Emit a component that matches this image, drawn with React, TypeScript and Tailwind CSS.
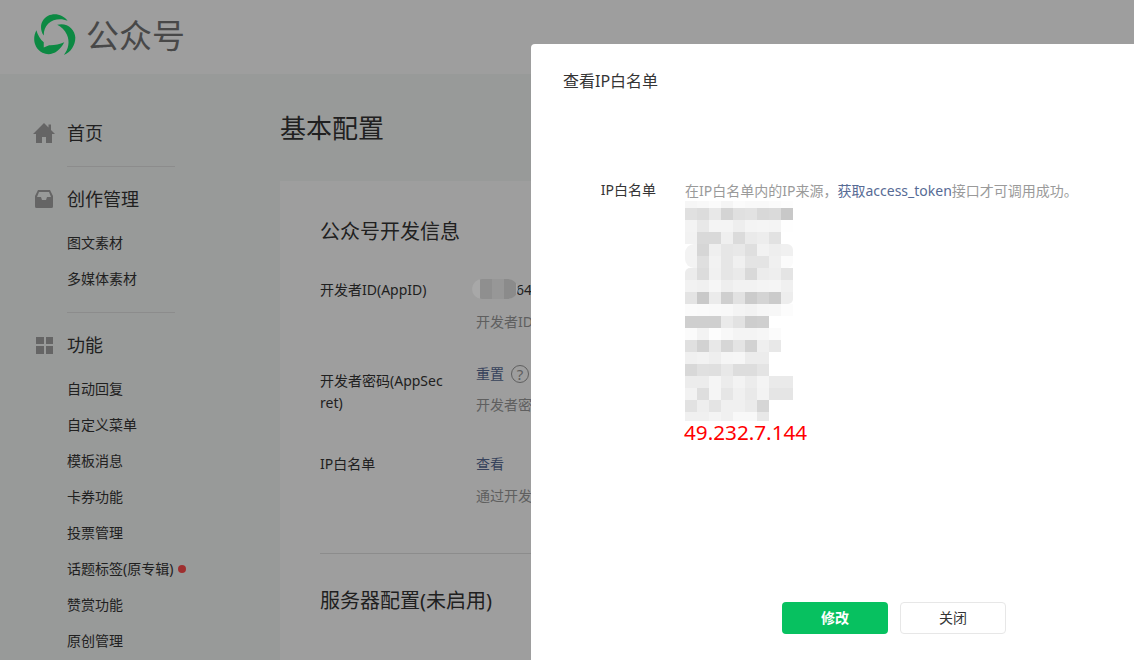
import React from "react";

const font = { fontFamily: '"Noto Sans", "Noto Sans CJK SC", sans-serif' };

const mosaic: { h: number; v: number[]; cls?: string }[] = [
  { h: 7, v: [0xf6, 0xf8, 0xfb, 0xf5, 0xfb, 0xf9, 0xf9, 0xfb, 0xfd] },
  { h: 12, v: [0xe0, 0xdc, 0xe8, 0xd4, 0xe0, 0xe2, 0xd8, 0xda, 0xc8] },
  { h: 12, v: [0xf3, 0xe8, 0xf4, 0xf4, 0xee, 0xf4, 0xf5, 0xf4, 0xfe] },
  { h: 12, v: [0xf2, 0xd9, 0xd9, 0xef, 0xdb, 0xea, 0xed, 0xe2, 0xff] },
  { h: 12, v: [0xf3, 0xd6, 0xef, 0xe6, 0xe8, 0xdf, 0xf2, 0xee, 0xf0], cls: "rounded-tl-[9px] rounded-tr-[6px]" },
  { h: 12, v: [0xf3, 0xdf, 0xf2, 0xe6, 0xf0, 0xe4, 0xe4, 0xf0, 0xfb], cls: "rounded-bl-[9px] rounded-br-[6px]" },
  { h: 12, v: [0xec, 0xdc, 0xf1, 0xe6, 0xea, 0xd9, 0xec, 0xee, 0xe4], cls: "rounded-tl-[5px]" },
  { h: 12, v: [0xf2, 0xf0, 0xf6, 0xee, 0xf2, 0xf2, 0xf4, 0xf5, 0xf0] },
  { h: 12, v: [0xe4, 0xc9, 0xeb, 0xcf, 0xe2, 0xcb, 0xd4, 0xcb, 0xed], cls: "rounded-br-[5px]" },
  { h: 12, v: [0xfb, 0xfa, 0xf9, 0xf8, 0xf4, 0xf2, 0xf6, 0xf7, 0xfc] },
  { h: 12, v: [0xcf, 0xcf, 0xcf, 0xea, 0xe2, 0xcd, 0xcf, 0xff, 0xff] },
  { h: 12, v: [0xfb, 0xf3, 0xfd, 0xf8, 0xf4, 0xf4, 0xf6, 0xfb, 0xff] },
  { h: 12, v: [0xe0, 0xd2, 0xe8, 0xd6, 0xe4, 0xd2, 0xef, 0xe8, 0xff] },
  { h: 12, v: [0xf0, 0xf2, 0xee, 0xf5, 0xf6, 0xec, 0xec, 0xff, 0xff] },
  { h: 12, v: [0xd8, 0xe0, 0xdf, 0xe8, 0xdd, 0xdd, 0xe4, 0xff, 0xff] },
  { h: 12, v: [0xec, 0xec, 0xf5, 0xec, 0xf3, 0xec, 0xf4, 0xea, 0xea] },
  { h: 12, v: [0xf2, 0xde, 0xf5, 0xe6, 0xf0, 0xe9, 0xf3, 0xe5, 0xe5] },
  { h: 12, v: [0xe2, 0xee, 0xe4, 0xf0, 0xf0, 0xeb, 0xd6, 0xff, 0xff] },
  { h: 9, v: [0xf0, 0xf0, 0xf4, 0xf0, 0xf8, 0xf8, 0xe8, 0xff, 0xff] },
];

function Logo() {
  return (
    <svg width="43" height="43" viewBox="40 25 128 128" className="mt-[-5px] shrink-0" fill="#14de6c">
      <path d="M72 92C58 72 62 45 85 33C105 23 130 30 143 48C125 40 100 42 85 57C76 66 72 78 72 92Z" />
      <path d="M112 60C140 52 165 72 166 98C166 122 152 142 132 150C146 132 150 110 141 90C135 76 124 66 112 60Z" />
      <path d="M50 76C38 100 42 128 68 143C92 155 118 142 133 112C120 118 100 122 88 121L72 128L72 112C62 104 54 90 50 76Z" />
    </svg>
  );
}

function HomeIcon() {
  return (
    <svg width="22" height="20" viewBox="0 0 22 20" fill="#a4a4a4">
      <path d="M11 0L15.500 4.500V1.500H18V7L22 11H19V20H13V14H9V20H3V11H0Z" />
    </svg>
  );
}

function TrayIcon() {
  return (
    <svg width="18" height="18" viewBox="0 0 18 18" fill="#a4a4a4">
      <path
        fillRule="evenodd"
        d="M3 0H15L18 6V16.500Q18 18 16.500 18H1.500Q0 18 0 16.500V6ZM4 2L2 7H6L7 10H11L12 7H16L14 2Z"
      />
    </svg>
  );
}

function GridIcon() {
  return (
    <div className="ml-[3px] grid w-[17px] grid-cols-2 gap-[2px]">
      <div className="h-[7.5px] w-[7.5px] bg-[#a4a4a4]" />
      <div className="h-[7.5px] w-[7.5px] bg-[#a4a4a4]" />
      <div className="h-[7.5px] w-[7.5px] bg-[#a4a4a4]" />
      <div className="h-[7.5px] w-[7.5px] bg-[#a4a4a4]" />
    </div>
  );
}

function NavHead({ icon, label, cls }: { icon: React.ReactNode; label: string; cls: string }) {
  return (
    <div className={`flex h-9 items-center ${cls}`}>
      <div className="flex w-[34px] shrink-0 items-center justify-start">{icon}</div>
      <span className="text-[18px] text-[#353535]">{label}</span>
    </div>
  );
}

function SubItem({ label, dot }: { label: string; dot?: boolean }) {
  return (
    <div className="flex h-9 items-center pl-[34px] text-[14px] text-[#353535]">
      <span>{label}</span>
      {dot && <span className="ml-[5px] h-2 w-2 rounded-full bg-[#ff4d4d]" />}
    </div>
  );
}

export default function App() {
  return (
    <div
      className="relative h-[660px] w-[1134px] overflow-hidden bg-[#f6f8f7] text-[14px] leading-[22px]"
      style={font}
    >
      <header className="flex h-[74px] items-center gap-[10px] bg-white pl-[33px]">
        <Logo />
        <span className="mt-[-3px] text-[33px] leading-[40px] text-[#757575]">公众号</span>
      </header>

      <div className="flex">
        <aside className="w-[280px] shrink-0 pl-[33px] pt-[41px]">
          <NavHead icon={<HomeIcon />} label="首页" cls="" />
          <div className="ml-[34px] mt-[15px] h-px w-[108px] bg-[#e2e2e2]" />
          <NavHead icon={<div className="ml-[2px] flex"><TrayIcon /></div>} label="创作管理" cls="mt-[14px]" />
          <div className="mt-2">
            <SubItem label="图文素材" />
            <SubItem label="多媒体素材" />
          </div>
          <div className="ml-[34px] mt-[15px] h-px w-[108px] bg-[#e2e2e2]" />
          <NavHead icon={<GridIcon />} label="功能" cls="mt-[14px]" />
          <div className="mt-2">
            <SubItem label="自动回复" />
            <SubItem label="自定义菜单" />
            <SubItem label="模板消息" />
            <SubItem label="卡券功能" />
            <SubItem label="投票管理" />
            <SubItem label="话题标签(原专辑)" dot />
            <SubItem label="赞赏功能" />
            <SubItem label="原创管理" />
          </div>
        </aside>

        <main className="min-w-0 flex-1 pt-[34px]">
          <h1 className="text-[26px] font-normal leading-[40px] text-[#353535]">基本配置</h1>
          <section className="mt-[33px] h-[600px] bg-white pl-10 pt-[36px]">
            <h2 className="text-[20px] leading-[30px] text-[#353535]">公众号开发信息</h2>

            <div className="mt-[32px] flex">
              <div className="w-[156px] shrink-0 text-[#353535]">开发者ID(AppID)</div>
              <div className="whitespace-nowrap">
                <div className="pl-10 text-[#353535]">64</div>
                <div className="mt-[10px] text-[#9a9a9a]">开发者ID是公众号开发识别码</div>
              </div>
            </div>

            <div className="mt-[30px] flex">
              <div className="mt-[7px] w-[156px] shrink-0 pr-[30px] break-all text-[#353535]">
                开发者密码(AppSecret)
              </div>
              <div className="whitespace-nowrap">
                <div className="flex items-center gap-[7px] text-[#576b95]">
                  重置
                  <span className="flex h-[18px] w-[18px] items-center justify-center rounded-full border border-[#9a9a9a] text-[15px] leading-none text-[#9a9a9a]">
                    ?
                  </span>
                </div>
                <div className="mt-[9px] text-[#9a9a9a]">开发者密码是校验公众号开发者身份的密码</div>
              </div>
            </div>

            <div className="mt-[37px] flex">
              <div className="w-[156px] shrink-0 text-[#353535]">IP白名单</div>
              <div className="whitespace-nowrap">
                <div className="text-[#576b95]">查看</div>
                <div className="mt-[10px] text-[#9a9a9a]">通过开发者ID及密码调用获取access_token接口</div>
              </div>
            </div>

            <div className="mt-[46px] h-px bg-[#e2e2e2]" />
            <h2 className="mt-[32px] text-[20px] leading-[30px] text-[#353535]">服务器配置(未启用)</h2>
          </section>
        </main>
      </div>

      <div className="absolute inset-0 bg-black/[.38]" />

      {/* blurred AppID patch pasted over the dimmed page */}
      <div className="absolute left-[472px] top-[279px] flex h-[20px] w-[46px] items-center overflow-hidden rounded-full bg-[#a8a8a8] pl-[8px]">
        <div className="h-[20px] w-[12px] bg-[#8f8f8f]" />
        <div className="h-[20px] w-[12px] bg-[#979797]" />
        <div className="h-[20px] w-[12px] bg-[#8b8b8b]" />
      </div>

      <div className="absolute left-[531px] top-[44px] h-[700px] w-[726px] rounded-tl-[4px] bg-white pl-8 pt-[26px]">
        <h3 className="text-[16px] font-normal leading-[22px] text-[#353535]">查看IP白名单</h3>

        <div className="mt-[87px] flex">
          <div className="w-[93px] shrink-0 text-right text-[#353535]">IP白名单</div>
          <div className="ml-[29px] min-w-0">
            <div className="whitespace-nowrap pt-px text-[#9a9a9a]">
              在IP白名单内的IP来源，<span className="text-[#576b95]">获取access_token</span>接口才可调用成功。
            </div>
            <div className="mt-[-1px] w-[108px]">
              {mosaic.map((row, i) => (
                <div key={i} className={`flex overflow-hidden ${row.cls ?? ""}`} style={{ height: row.h }}>
                  {row.v.map((g, j) => (
                    <div key={j} className="w-3" style={{ backgroundColor: `rgb(${g},${g},${g})` }} />
                  ))}
                </div>
              ))}
            </div>
            <div className="-ml-px text-[20.7px] leading-[22px] text-[#ff0000]">49.232.7.144</div>
          </div>
        </div>

        <div className="mt-[159px] flex justify-center gap-3 pr-8">
          <button className="h-8 w-[106px] rounded-[4px] bg-[#07c160] text-[14px] font-bold text-white">修改</button>
          <button className="h-8 w-[106px] rounded-[4px] border border-[#e7e7e7] bg-white text-[14px] text-[#353535]">
            关闭
          </button>
        </div>
      </div>
    </div>
  );
}
